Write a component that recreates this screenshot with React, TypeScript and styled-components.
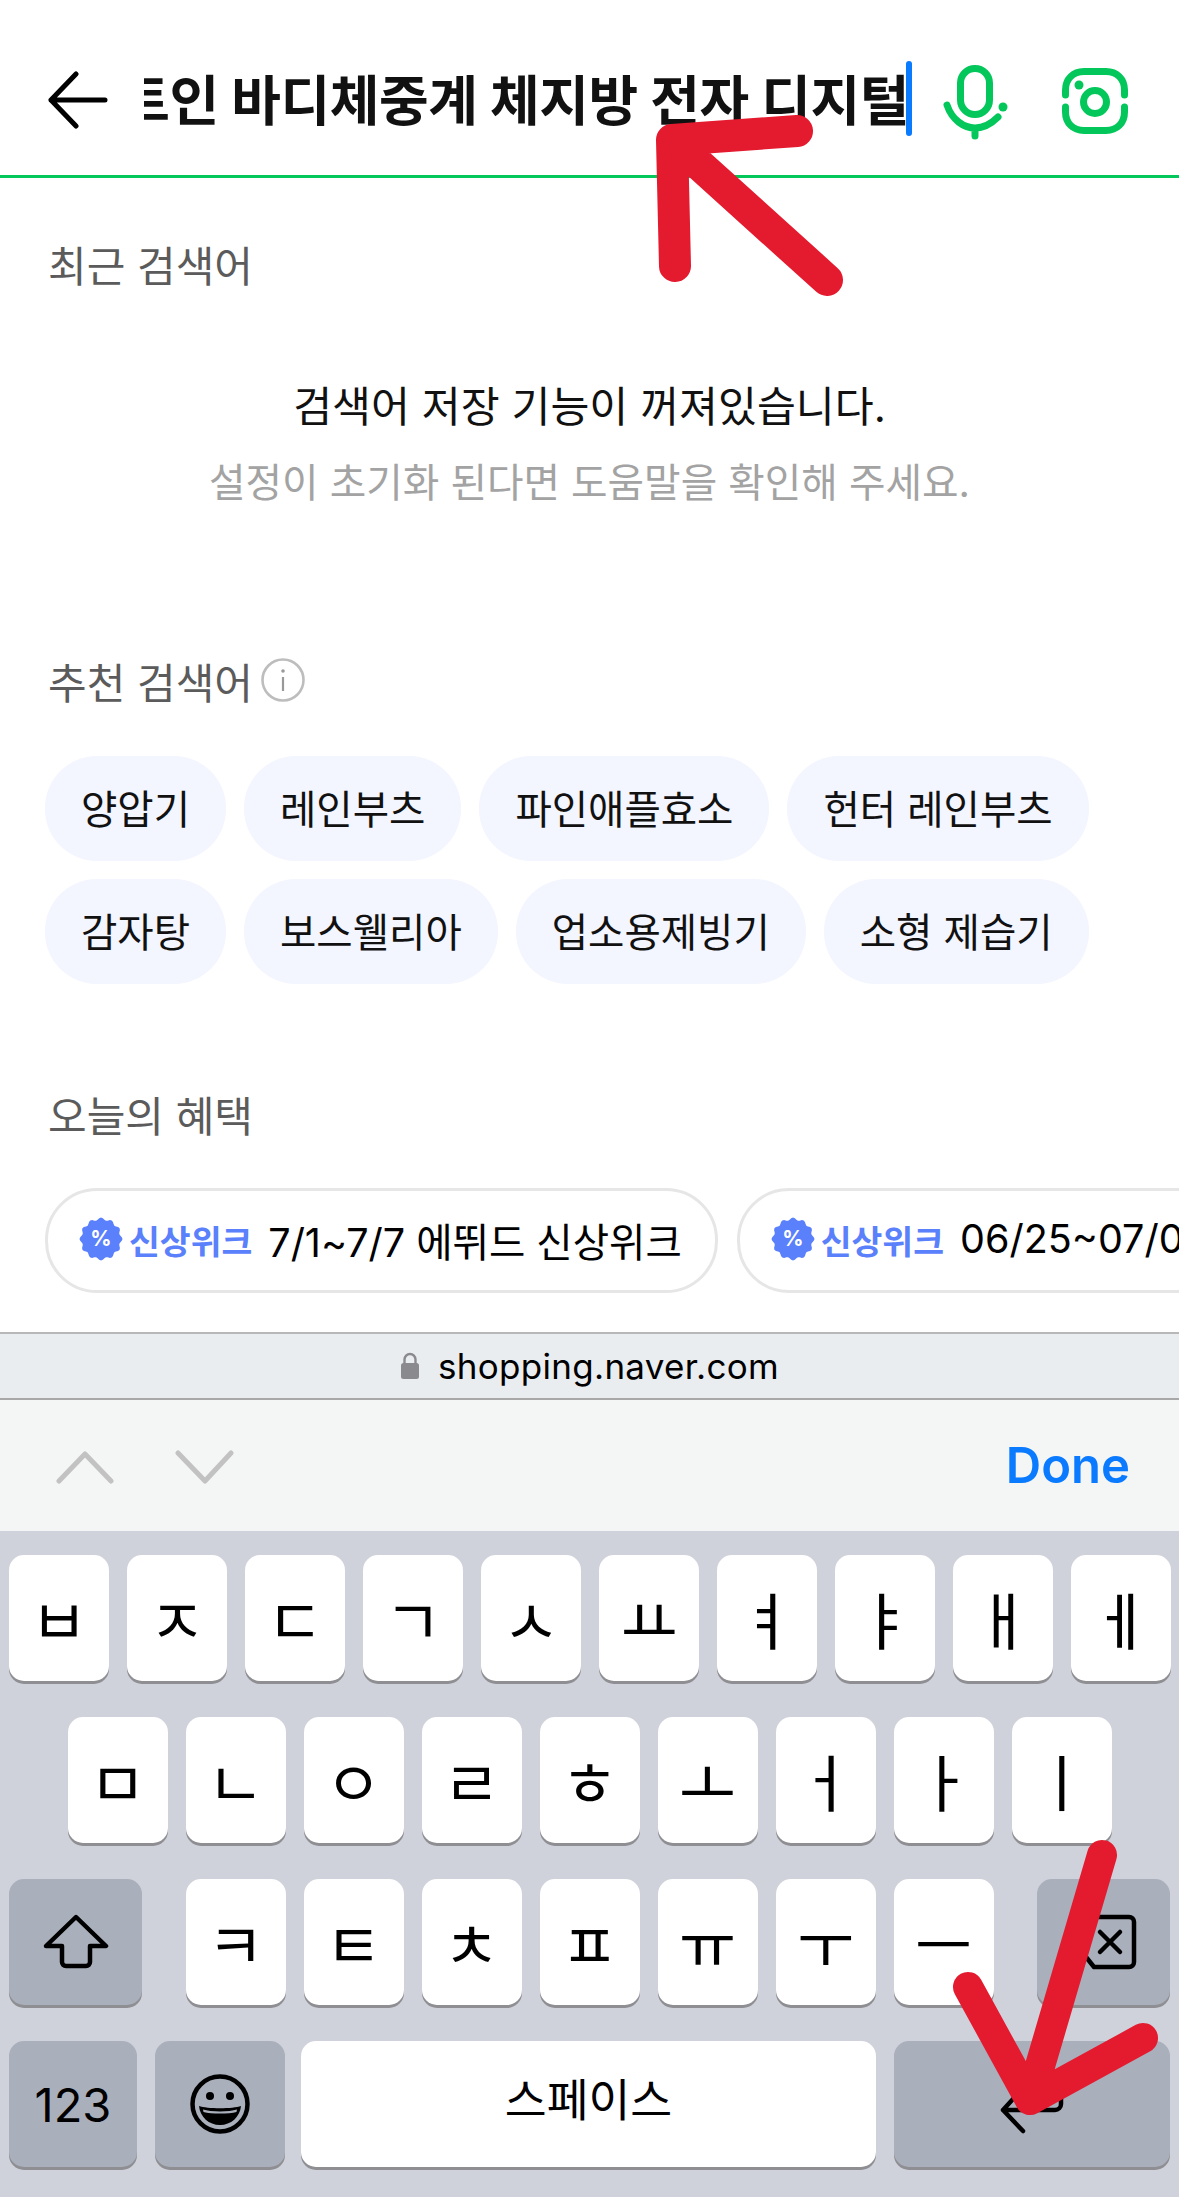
import React from "react";
import styled, { createGlobalStyle } from "styled-components";

const GREEN = "#03c75a";
const RED = "#e41a2f";

const row1 = ["양압기", "레인부츠", "파인애플효소", "헌터 레인부츠"];
const row2 = ["감자탕", "보스웰리아", "업소용제빙기", "소형 제습기"];
const keysTop = ["ㅂ", "ㅈ", "ㄷ", "ㄱ", "ㅅ", "ㅛ", "ㅕ", "ㅑ", "ㅐ", "ㅔ"];
const keysMid = ["ㅁ", "ㄴ", "ㅇ", "ㄹ", "ㅎ", "ㅗ", "ㅓ", "ㅏ", "ㅣ"];
const keysLow = ["ㅋ", "ㅌ", "ㅊ", "ㅍ", "ㅠ", "ㅜ", "ㅡ"];

// 물결 모양 뱃지 외곽선
function badgePath(cx: number, cy: number, r: number): string {
  const points: string[] = [];
  for (let i = 0; i < 72; i++) {
    const a = (i / 72) * Math.PI * 2;
    const rr = r - 1.3 + 1.3 * Math.cos(a * 12);
    points.push(`${(cx + rr * Math.cos(a)).toFixed(2)},${(cy + rr * Math.sin(a)).toFixed(2)}`);
  }
  return `M${points.join("L")}Z`;
}

export default function App(): JSX.Element {
  return (
    <Page>
      <GlobalStyle />
      <Header>
        <BackIcon viewBox="0 0 60 60" fill="none" stroke="#000" strokeWidth="5" strokeLinecap="round" strokeLinejoin="round">
          <path d="M57 30H3M28 4L3 30L28 56" />
        </BackIcon>
        <SearchText>
          <span>스마트인 바디체중계 체지방 전자 디지털</span>
        </SearchText>
        <Caret />
        <MicIcon viewBox="0 0 70 84" fill="none" stroke={GREEN} strokeWidth="7" strokeLinecap="round">
          <rect x="20.5" y="8.5" width="29" height="46" rx="14.5" />
          <path d="M7 45C12 60 24 68 35 68C44 68 52 63 58 57M35 68V76" />
          <circle cx="63" cy="47" r="4.5" fill={GREEN} stroke="none" />
        </MicIcon>
        <CameraIcon viewBox="0 0 66 66" fill="none" stroke={GREEN} strokeWidth="7" strokeLinecap="round">
          <path d="M3.5 27V22C3.5 11 11 3.5 22 3.5H44C55 3.5 62.5 11 62.5 22V27" />
          <path d="M3.5 39V44C3.5 55 11 62.5 22 62.5H44C55 62.5 62.5 55 62.5 44V39" />
          <circle cx="33" cy="34" r="11.5" />
          <circle cx="17" cy="17" r="4.5" fill={GREEN} stroke="none" />
        </CameraIcon>
      </Header>

      <Content>
        <RecentSection>
          <SectionTitle>최근 검색어</SectionTitle>
          <EmptyTitle>검색어 저장 기능이 꺼져있습니다.</EmptyTitle>
          <EmptySub>설정이 초기화 된다면 도움말을 확인해 주세요.</EmptySub>
        </RecentSection>

        <RecommendSection>
          <SectionTitle>
            추천 검색어
            <InfoIcon viewBox="0 0 44 44" fill="none" stroke="#bdbdbd" strokeWidth="2.6">
              <circle cx="22" cy="22" r="20.5" />
              <path d="M22 19V33" stroke="#999" strokeWidth="2.2" />
              <circle cx="22" cy="13" r="1.8" fill="#999" stroke="none" />
            </InfoIcon>
          </SectionTitle>
          <ChipRow>
            {row1.map((t) => (
              <Chip key={t}>{t}</Chip>
            ))}
          </ChipRow>
          <ChipRow>
            {row2.map((t) => (
              <Chip key={t}>{t}</Chip>
            ))}
          </ChipRow>
        </RecommendSection>

        <BenefitSection>
          <SectionTitle>오늘의 혜택</SectionTitle>
          <BenefitRow>
            <Benefit>
              <Badge />
              <BenefitTag>신상위크</BenefitTag>
              7/1~7/7 에뛰드 신상위크
            </Benefit>
            <Benefit>
              <Badge />
              <BenefitTag>신상위크</BenefitTag>
              06/25~07/01
            </Benefit>
          </BenefitRow>
        </BenefitSection>
      </Content>

      <AddressBar>
        <LockIcon viewBox="0 0 20 28" fill="none">
          <path d="M4.5 12V7.5a5.5 5.5 0 0 1 11 0V12" stroke="#8a8a8e" strokeWidth="2.4" />
          <rect x="1" y="11" width="18" height="16" rx="2.5" fill="#8a8a8e" />
        </LockIcon>
        shopping.naver.com
      </AddressBar>

      <Toolbar>
        <Chevrons viewBox="0 0 178 36" fill="none" stroke="#c2c2c2" strokeWidth="5" strokeLinecap="round" strokeLinejoin="round">
          <path d="M3 33L29 6L55 33" />
          <path d="M122 5L149 33L175 5" />
        </Chevrons>
        <DoneText>Done</DoneText>
      </Toolbar>

      <Keyboard>
        <KeyRow>
          {keysTop.map((k) => (
            <Key key={k}>{k}</Key>
          ))}
        </KeyRow>
        <KeyRow $center>
          {keysMid.map((k) => (
            <Key key={k}>{k}</Key>
          ))}
        </KeyRow>
        <KeyRow $between>
          <Key $gray $w={133}>
            <svg width="66" height="56" viewBox="0 0 66 56" fill="none" stroke="#000" strokeWidth="4.5" strokeLinejoin="round">
              <path d="M33 3L63 32H47V48a4 4 0 0 1-4 4H23a4 4 0 0 1-4-4V32H3Z" />
            </svg>
          </Key>
          <KeyGroup>
            {keysLow.map((k) => (
              <Key key={k}>{k}</Key>
            ))}
          </KeyGroup>
          <Key $gray $w={133}>
            <svg width="66" height="56" viewBox="0 0 66 56" fill="none" stroke="#000" strokeWidth="4.5" strokeLinejoin="round" strokeLinecap="round">
              <path d="M23 3H58a5 5 0 0 1 5 5V48a5 5 0 0 1-5 5H23L3 28Z" />
              <path d="M29 18L49 38M49 18L29 38" />
            </svg>
          </Key>
        </KeyRow>
        <KeyRow>
          <Key $gray $w={128} $small>
            123
          </Key>
          <Key $gray $w={130}>
            <svg width="62" height="62" viewBox="0 0 62 62" fill="none" stroke="#000" strokeWidth="4.5">
              <circle cx="31" cy="31" r="27.5" />
              <circle cx="21" cy="23" r="4" fill="#000" stroke="none" />
              <circle cx="41" cy="23" r="4" fill="#000" stroke="none" />
              <path d="M10 33C18 36 44 36 52 33C51 44 42 52 31 52C20 52 11 44 10 33Z" fill="#000" stroke="none" />
              <path d="M14 36.5C22 39 40 39 48 36.5L47.5 39C40 41 22 41 14.5 39Z" fill="#a9afbb" stroke="none" />
            </svg>
          </Key>
          <SpaceKey $w={575}>
            <span>스페이스</span>
          </SpaceKey>
          <Key $gray $w={276}>
            <svg width="66" height="60" viewBox="0 0 66 60" fill="none" stroke="#000" strokeWidth="4.5" strokeLinecap="round" strokeLinejoin="round">
              <path d="M24 14L4 36L24 57M4 36H56a6 6 0 0 0 6-6V2" />
            </svg>
          </Key>
        </KeyRow>
      </Keyboard>

      <Marks viewBox="0 0 1179 2197" fill="none" stroke={RED} strokeWidth="32" strokeLinecap="round" strokeLinejoin="round">
        <path d="M797 131L672 140L675 266M672 140L827 280" />
        <path d="M1102 1855L1030 2100M968 1987L1030 2100L1143 2038" strokeWidth="30" />
      </Marks>
    </Page>
  );
}

function Badge(): JSX.Element {
  return (
    <BadgeIcon viewBox="0 0 44 44">
      <path d={badgePath(22, 22, 21.5)} fill="#5a80fb" />
      <text x="22" y="29" textAnchor="middle" fontSize="21" fontWeight="700" fill="#fff" fontFamily="Inter, sans-serif">
        %
      </text>
    </BadgeIcon>
  );
}

const GlobalStyle = createGlobalStyle`
  html, body {
    margin: 0;
    padding: 0;
    background: #fff;
  }
`;

const Page = styled.div`
  position: relative;
  width: 1179px;
  height: 2197px;
  overflow: hidden;
  display: flex;
  flex-direction: column;
  background: #fff;
  font-family: Inter, "Noto Sans CJK KR", sans-serif;
  color: #000;
`;

const Header = styled.header`
  flex: none;
  box-sizing: content-box;
  height: 150px;
  padding: 25px 51px 0 48px;
  display: flex;
  align-items: center;
  border-bottom: 3px solid ${GREEN};
`;

const BackIcon = styled.svg`
  flex: none;
  width: 60px;
  height: 60px;
`;

const SearchText = styled.div`
  flex: none;
  width: 765px;
  margin-left: 36px;
  margin-right: -3px;
  display: flex;
  justify-content: flex-end;
  overflow: hidden;
  white-space: nowrap;
  font-size: 54px;
  font-weight: 700;
  letter-spacing: -0.4px;
  color: #111;
  margin-top: -6px;
`;

const Caret = styled.div`
  flex: none;
  position: relative;
  width: 6px;
  height: 75px;
  border-radius: 3px;
  background: #0a7aff;
  margin-top: -3px;
`;

const MicIcon = styled.svg`
  flex: none;
  width: 70px;
  height: 84px;
  margin-left: 28px;
  margin-top: 4px;
`;

const CameraIcon = styled.svg`
  flex: none;
  width: 66px;
  height: 66px;
  margin-left: 52px;
  margin-top: 2px;
`;

const Content = styled.main`
  flex: 1;
  min-height: 0;
  overflow: hidden;
`;

const RecentSection = styled.section`
  padding: 60px 48px 0;
`;

const SectionTitle = styled.h2`
  margin: 0;
  display: flex;
  align-items: center;
  height: 50px;
  font-size: 42px;
  font-weight: 400;
  color: #5b5b5b;
`;

const EmptyTitle = styled.p`
  margin: 91px 0 0;
  text-align: center;
  font-size: 42.3px;
  line-height: 56px;
  font-weight: 400;
  color: #111;
`;

const EmptySub = styled.p`
  margin: 20px 0 0;
  text-align: center;
  font-size: 39.7px;
  line-height: 56px;
  font-weight: 400;
  color: #a3a3a3;
`;

const RecommendSection = styled.section`
  padding: 144px 45px 0;

  h2 {
    padding-left: 3px;
  }
`;

const InfoIcon = styled.svg`
  width: 44px;
  height: 44px;
  margin-left: 8px;
`;

const ChipRow = styled.div`
  display: flex;
  gap: 18px;
  margin-top: 18px;

  h2 + & {
    margin-top: 51px;
  }
`;

const Chip = styled.div`
  flex: none;
  box-sizing: border-box;
  height: 105px;
  padding: 0 36px 4px;
  border-radius: 52px;
  display: flex;
  align-items: center;
  background: #f3f5ff;
  font-size: 39.5px;
  color: #111;
  white-space: nowrap;
`;

const BenefitSection = styled.section`
  padding: 104px 0 0 45px;

  h2 {
    padding-left: 3px;
  }
`;

const BenefitRow = styled.div`
  display: flex;
  gap: 19px;
  margin-top: 50px;
`;

const Benefit = styled.div`
  flex: none;
  box-sizing: border-box;
  height: 105px;
  padding: 0 33px 3px 31px;
  border: 3px solid #e6e6e6;
  border-radius: 52px;
  display: flex;
  align-items: center;
  font-size: 39.5px;
  white-space: nowrap;
`;

const BadgeIcon = styled.svg`
  flex: none;
  width: 44px;
  height: 44px;
  margin-right: 6px;
`;

const BenefitTag = styled.span`
  font-weight: 600;
  font-size: 33.5px;
  color: #5a80fb;
  margin-right: 16px;
`;

const AddressBar = styled.div`
  flex: none;
  box-sizing: border-box;
  height: 68px;
  display: flex;
  align-items: center;
  justify-content: center;
  gap: 18px;
  background: #eaedf0;
  border-top: 2px solid #b8b8b8;
  border-bottom: 2px solid #a8a8a8;
  font-size: 35px;
  letter-spacing: 0.3px;
`;

const LockIcon = styled.svg`
  width: 20px;
  height: 28px;
`;

const Toolbar = styled.div`
  flex: none;
  height: 131px;
  box-sizing: border-box;
  padding: 0 49px 0 56px;
  display: flex;
  align-items: center;
  justify-content: space-between;
  background: #f4f5f5;
`;

const Chevrons = styled.svg`
  width: 178px;
  height: 36px;
`;

const DoneText = styled.span`
  font-family: Inter, sans-serif;
  font-size: 49px;
  font-weight: 600;
  color: #0a7aff;
`;

const Keyboard = styled.div`
  flex: none;
  box-sizing: border-box;
  height: 666px;
  padding: 24px 9px 0;
  display: flex;
  flex-direction: column;
  gap: 36px;
  background: #cfd2da;
`;

const KeyRow = styled.div<{ $center?: boolean; $between?: boolean }>`
  display: flex;
  gap: 18px;
  justify-content: ${(p) => (p.$center ? "center" : p.$between ? "space-between" : "flex-start")};
`;

const KeyGroup = styled.div`
  display: flex;
  gap: 18px;
`;

const Key = styled.div<{ $gray?: boolean; $w?: number; $small?: boolean }>`
  flex: none;
  width: ${(p) => p.$w ?? 100}px;
  height: 126px;
  border-radius: 15px;
  display: flex;
  align-items: center;
  justify-content: center;
  background: ${(p) => (p.$gray ? "#a9afbb" : "#fff")};
  box-shadow: 0 3px 0 #8e8e93;
  font-size: ${(p) => (p.$small ? 47 : 62)}px;
  font-family: ${(p) => (p.$small ? "Inter, sans-serif" : '"Noto Sans CJK KR", sans-serif')};
  font-weight: 400;
  line-height: 1;
`;

const SpaceKey = styled(Key)`
  margin-left: -2px;
  font-size: 45.5px;

  span {
    margin-top: -12px;
  }
`;

const Marks = styled.svg`
  position: absolute;
  left: 0;
  top: 0;
  width: 1179px;
  height: 2197px;
  pointer-events: none;
`;
